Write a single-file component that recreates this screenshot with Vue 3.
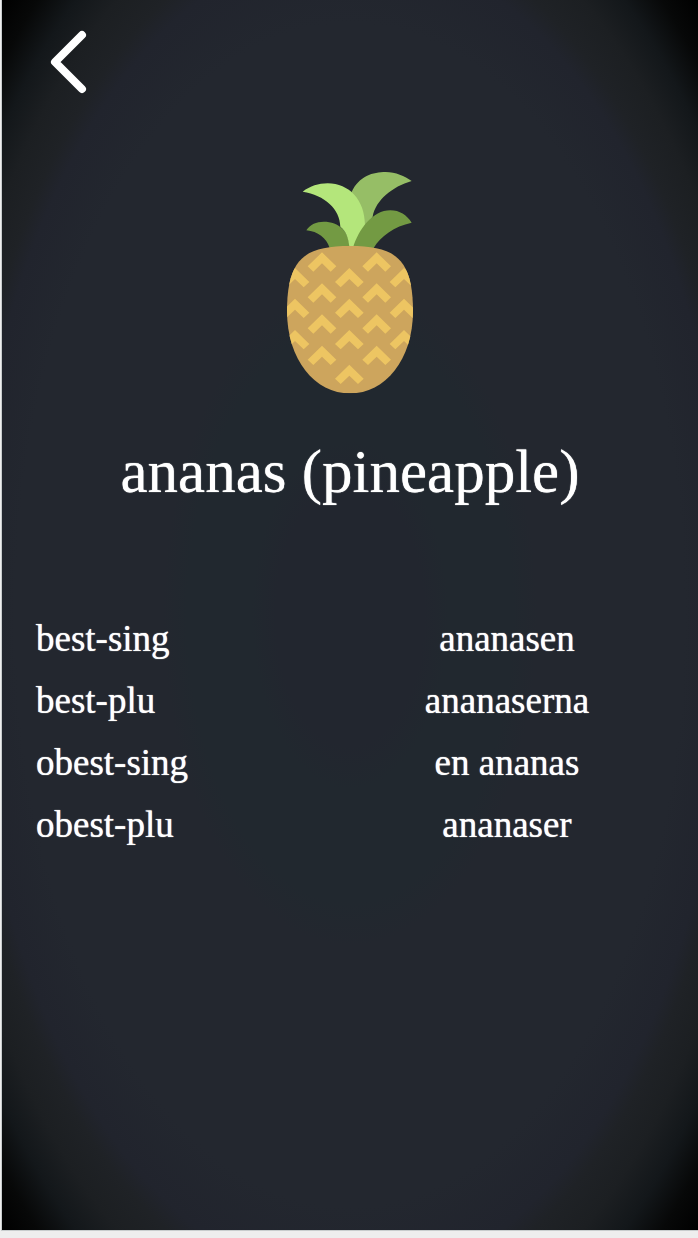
<script setup>
const word = { swedish: 'ananas', english: 'pineapple' }

const forms = [
  { name: 'best-sing', value: 'ananasen' },
  { name: 'best-plu', value: 'ananaserna' },
  { name: 'obest-sing', value: 'en ananas' },
  { name: 'obest-plu', value: 'ananaser' },
]

const columns = [
  { x: 129, rows: [277, 370, 463, 557] },
  { x: 293, rows: [277, 370, 463, 557] },
  { x: 211, rows: [324, 416, 510, 614] },
  { x: 48, rows: [324, 416, 510] },
  { x: 375, rows: [324, 416, 510] },
]
const chevrons = columns.flatMap(({ x, rows }) => rows.map((y) => ({ x, y })))
</script>

<template>
  <div class="frame">
    <main class="card">
      <header class="bar">
        <button class="back" type="button" aria-label="Back">
          <svg viewBox="0 0 44 70" width="44" height="70" aria-hidden="true">
            <path d="M36 8 L9 35 L36 62" />
          </svg>
        </button>
      </header>

      <svg class="picture" viewBox="-3 0 435 720" role="img" aria-label="Pineapple">
        <defs>
          <clipPath id="fruit">
            <path d="M213 258 C292 258 343 270 373 314 C394 345 402 395 402 452 C402 600 318 700 213 700 C108 700 24 600 24 452 C24 395 32 345 53 314 C83 270 134 258 213 258Z" />
          </clipPath>
        </defs>
        <path fill="#96be66" d="M218 96 C240 48 282 36 320 36 C350 36 377 48 398 63 C340 80 290 120 281 170 L255 205Z" />
        <path fill="#739a43" d="M82 211 C94 193 112 185 134 185 C180 185 212 215 212 264 L152 264 C142 233 117 215 82 211Z" />
        <path fill="#b4e67b" d="M71 95 C94 78 118 70 146 70 C210 70 258 120 258 195 L224 262 L211 262 C209 235 201 213 184 200 C183 147 137 105 71 95Z" />
        <path fill="#739a43" d="M222 264 C239 207 281 151 334 151 C362 151 383 165 398 188 C346 199 304 229 284 264Z" />
        <g clip-path="url(#fruit)">
          <path fill="#cda55d" d="M0 250 H435 V710 H0Z" />
          <path
            v-for="c in chevrons"
            :key="`${c.x}-${c.y}`"
            fill="#edc562"
            :transform="`translate(${c.x} ${c.y})`"
            d="M0 0 L43 42 L26 58 L0 33 L-26 58 L-43 42Z"
          />
        </g>
      </svg>

      <h1 class="title">{{ word.swedish }} ({{ word.english }})</h1>

      <table class="forms">
        <tbody>
          <tr v-for="form in forms" :key="form.name">
            <th scope="row">{{ form.name }}</th>
            <td>{{ form.value }}</td>
          </tr>
        </tbody>
      </table>
    </main>
  </div>
</template>

<style>
body {
  margin: 0;
  background: #eeeeee;
}
</style>

<style scoped>
.frame {
  box-sizing: border-box;
  display: flex;
  min-height: 100vh;
  padding: 0 0 7px 1px;
}

.card {
  flex: 1;
  box-sizing: border-box;
  display: flex;
  flex-direction: column;
  align-items: center;
  padding: 27px 34px 0;
  border-left: 1px solid #c8cccd;
  border-bottom: 1px solid #c8cccd;
  background: radial-gradient(
    ellipse farthest-corner at center,
    #22262f 0%,
    #22262f 15%,
    #21282f 20%,
    #21282f 33%,
    #23272f 38%,
    #23272f 68%,
    #21242d 77%,
    #1f2226 80%,
    #1c1f22 85%,
    #13171a 90%,
    #070808 95%,
    #000000 100%
  );
  color: #ffffff;
  font-family: "Liberation Serif", "Times New Roman", serif;
  text-shadow: 0 0 1px #ffffff;
}

.bar {
  align-self: stretch;
  display: flex;
  padding-left: 10px;
}

.back {
  display: block;
  padding: 0;
  border: 0;
  background: none;
  cursor: pointer;
}

.back svg {
  display: block;
  fill: none;
  stroke: #ffffff;
  stroke-width: 8;
  stroke-linecap: round;
  stroke-linejoin: round;
}

.picture {
  display: block;
  width: 145px;
  height: 240px;
  margin: 63px 0 36px;
}

.title {
  margin: 0 0 100px;
  font-size: 61px;
  line-height: 72px;
  font-weight: 400;
  text-align: center;
}

.forms {
  width: 100%;
  table-layout: fixed;
  border-collapse: collapse;
  font-size: 37px;
  line-height: 62px;
}

.forms th,
.forms td {
  padding: 0;
  font-weight: 400;
}

.forms th {
  text-align: left;
}

.forms td {
  text-align: center;
}
</style>
